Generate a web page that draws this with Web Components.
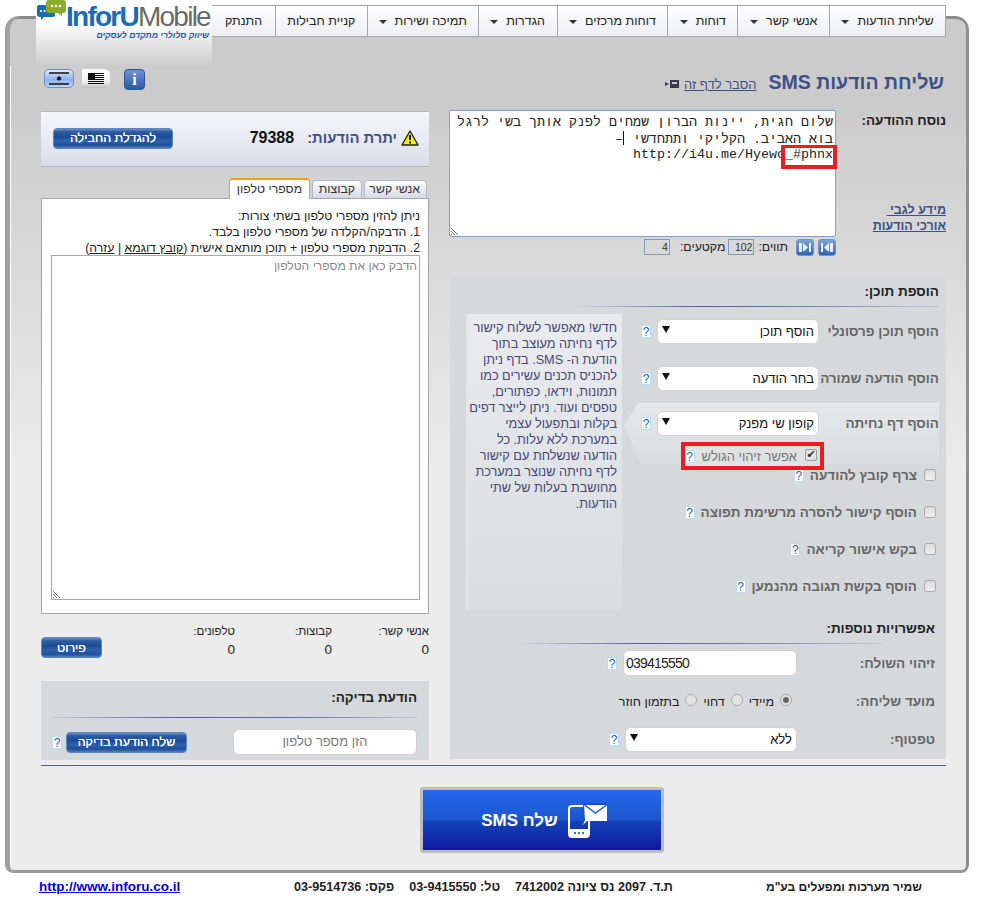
<!DOCTYPE html>
<html lang="he" dir="rtl">
<head>
<meta charset="utf-8">
<title>InforUMobile</title>
<style>
  html, body { margin: 0; padding: 0; background: #fff; }
  body { font-family: "Liberation Sans", Arial, sans-serif; font-size: 13px; color: #222; width: 982px; height: 898px; overflow: hidden; }
</style>
</head>
<body>
<sms-page></sms-page>
<script>
class HelpMark extends HTMLElement {
    connectedCallback() {
        this.attachShadow({ mode: 'open' });
        this.shadowRoot.innerHTML = `
            <style>
                :host {
                    display: inline-block;
                    box-sizing: border-box;
                    width: 10px;
                    height: 13px;
                    background: #fff;
                    border: 1px solid #bcdcf5;
                    color: #1a5fa8;
                    font: 12px/12px "Liberation Sans", sans-serif;
                    text-align: center;
                    flex: none;
                }
            </style>?`;
    }
}

class BlueButton extends HTMLElement {
    connectedCallback() {
        this.attachShadow({ mode: 'open' });
        this.shadowRoot.innerHTML = `
            <style>
                :host {
                    display: flex;
                    align-items: center;
                    justify-content: center;
                    box-sizing: border-box;
                    height: 21px;
                    border: 1px solid #5d86c0;
                    border-radius: 4px;
                    background: linear-gradient(#6f90c4 0, #2f5ca5 14%, #1c4a94 40%, #2f62ad 62%, #1f4f9c 85%, #4f7cbb 100%);
                    color: #fff;
                    font: 12.500px "Liberation Sans", sans-serif;
                    text-shadow: 0 0 0.5px #fff;
                    flex: none;
                }
            </style><slot></slot>`;
    }
}

class FakeSelect extends HTMLElement {
    connectedCallback() {
        this.attachShadow({ mode: 'open' });
        this.shadowRoot.innerHTML = `
            <style>
                :host {
                    display: flex;
                    align-items: center;
                    justify-content: space-between;
                    box-sizing: border-box;
                    height: 25px;
                    padding: 0 4px 0 4px;
                    background: #fff;
                    border: 1px solid #d2d2d2;
                    border-radius: 6px;
                    font: 13px "Liberation Sans", sans-serif;
                    color: #111;
                    flex: none;
                }
                .arrow { width: 0; height: 0; border: 4px solid transparent; border-top: 7px solid #111; border-bottom: 0; margin-top: -4px; }
            </style><span><slot></slot></span><i class="arrow"></i>`;
    }
}

class CheckRow extends HTMLElement {
    connectedCallback() {
        this.attachShadow({ mode: 'open' });
        this.shadowRoot.innerHTML = `
            <style>
                :host {
                    display: flex;
                    align-items: center;
                    gap: 7px;
                    height: 18px;
                    font: bold 13.500px "Liberation Sans", sans-serif;
                    color: #666;
                }
                .box {
                    box-sizing: border-box;
                    width: 12px;
                    height: 12px;
                    border: 1px solid #a9a9a9;
                    border-radius: 3px;
                    background: linear-gradient(#dcdcdc, #efefef);
                    flex: none;
                }
                help-mark { margin-right: -1px; }
            </style>
            <span class="box"></span>
            <span><slot></slot></span>
            <help-mark></help-mark>`;
    }
}

class SiteLogo extends HTMLElement {
    connectedCallback() {
        this.attachShadow({ mode: 'open' });
        this.shadowRoot.innerHTML = `
            <style>
                :host {
                    display: block;
                    position: relative;
                    box-sizing: border-box;
                    width: 176px;
                    height: 66px;
                    background: linear-gradient(#fff 0, #fff 22px, #cbcbcb 66px);
                    flex: none;
                    direction: ltr;
                }
                svg { position: absolute; left: 1px; top: 0; }
                .name {
                    position: absolute;
                    left: 30px;
                    top: 3px;
                    font: 28px/27px "Liberation Sans", sans-serif;
                    letter-spacing: -1.750px;
                    color: #6a6a6a;
                    white-space: nowrap;
                }
                .name b { color: #1b6db3; }
                .tag {
                    position: absolute;
                    right: 3px;
                    top: 30px;
                    direction: rtl;
                    font: italic bold 8.600px/10px "Liberation Sans", sans-serif;
                    color: #2a58a5;
                    white-space: nowrap;
                }
            </style>
            <svg width="30" height="21" viewBox="0 0 30 21">
                <path d="M2 5h14a2 2 0 0 1 2 2v8a2 2 0 0 1-2 2H7l-3 3 0-3H3a3 3 0 0 1-3-3V7a2 2 0 0 1 2-2z" fill="#1b6db3"/>
                <circle cx="4" cy="11" r="1" fill="#fff"/><circle cx="7.500" cy="11" r="1" fill="#fff"/>
                <path d="M12 0h14a3 3 0 0 1 3 3v7a3 3 0 0 1-3 3h-1l0 3-4-3H12a3 3 0 0 1-3-3V3a3 3 0 0 1 3-3z" fill="#8aab2b"/>
                <circle cx="15" cy="6" r="1.200" fill="#fff"/><circle cx="19" cy="6" r="1.200" fill="#fff"/><circle cx="23" cy="6" r="1.200" fill="#fff"/>
            </svg>
            <div class="name"><b>InforU</b>Mobile</div>
            <div class="tag">שיווק סלולרי מתקדם לעסקים</div>`;
    }
}

class TopNav extends HTMLElement {
    connectedCallback() {
        this.attachShadow({ mode: 'open' });
        const items = [
            ['שליחת הודעות', 116, 1], ['אנשי קשר', 92, 1], ['דוחות', 70, 1], ['דוחות מרכזים', 111, 1],
            ['הגדרות', 79, 1], ['תמיכה ושירות', 111, 1], ['קניית חבילות', 92, 0], ['התנתק', 63, 0]
        ];
        this.shadowRoot.innerHTML = `
            <style>
                :host {
                    display: flex;
                    box-sizing: border-box;
                    height: 32px;
                    margin-top: 5px;
                    border: 1px solid #a6a6a6;
                    border-left: 0;
                    background: linear-gradient(#fff, #eceef2);
                    flex: none;
                }
                .item {
                    box-sizing: border-box;
                    display: flex;
                    align-items: center;
                    justify-content: center;
                    gap: 8px;
                    border-left: 1px solid #a6a6a6;
                    font: 12.500px "Liberation Sans", sans-serif;
                    color: #222;
                }
                .item:last-child { border-left: 0; }
                .caret { width: 0; height: 0; border: 4px solid transparent; border-top: 4px solid #333; border-bottom: 0; margin-top: 1px; }
            </style>
            ${items.map(([t, w, c]) => `<div class="item" style="width:${w}px">${t}${c ? '<i class="caret"></i>' : ''}</div>`).join('')}`;
    }
}

class TitleBar extends HTMLElement {
    connectedCallback() {
        this.attachShadow({ mode: 'open' });
        this.shadowRoot.innerHTML = `
            <style>
                :host { display: flex; align-items: center; height: 44px; padding: 0 2px 12px 0; box-sizing: border-box; }
                h1 { margin: 0; font: bold 19.500px "Liberation Sans", sans-serif; color: #3f5089; white-space: nowrap; }
                a { display: flex; align-items: center; gap: 5px; margin-right: 12px; margin-top: 4px; color: #3f5089; text-decoration: underline; font: 13px "Liberation Sans", sans-serif; white-space: nowrap; }
                .tools { margin-right: auto; align-self: flex-start; margin-top: 3px; margin-left: 3px; display: flex; direction: ltr; }
                .pill { box-sizing: border-box; height: 19px; display: flex; align-items: center; justify-content: center; }
                .il { width: 30px; margin-right: 8px; border-radius: 5px; background: linear-gradient(#e3ecfb, #8db0f4 55%, #c2d4f7); border: 1px solid #6d8fc9; }
                .us { width: 28px; margin-right: 14px; border-radius: 0 6px 6px 0; background: linear-gradient(#fff, #ececec 70%, #bcbcbc); }
                .info { box-sizing: border-box; width: 21px; height: 21px; border: 1px solid #2f5594; border-radius: 4px; background: linear-gradient(#6e94cf, #2a5ba6); color: #fff; font: bold 16px/19px "Liberation Serif", serif; text-align: center; }
            </style>
            <h1>שליחת הודעות SMS</h1>
            <a>הסבר לדף זה
                <svg width="14" height="10" viewBox="0 0 14 10"><path d="M5 1h9v8H5zM0 3l4 2-4 2z" fill="#3a3a4a"/><path d="M7 3h5v2H7z" fill="#ccc"/></svg>
            </a>
            <div class="tools">
                <div class="pill il"><svg width="20" height="13" viewBox="0 0 20 13"><path d="M0 1h20M0 12h20" stroke="#111" stroke-width="1.400"/><path d="M10 3.500l2.500 4.200H7.500zM10 9.200L7.500 5.200h5z" fill="#111"/></svg></div>
                <div class="pill us"><svg width="16" height="11" viewBox="0 0 16 11"><path d="M0 .5h16M0 2.500h16M0 4.500h16M0 6.500h16M0 8.500h16M0 10.500h16" stroke="#111"/><rect width="7" height="6" fill="#111"/></svg></div>
                <div class="info">i</div>
            </div>`;
    }
}

class MessageEditor extends HTMLElement {
    connectedCallback() {
        this.attachShadow({ mode: 'open' });
        this.shadowRoot.innerHTML = `
            <style>
                :host { display: grid; grid-template-columns: 110px 387px; height: 167px; font-family: "Liberation Sans", sans-serif; }
                .side { position: relative; display: flex; flex-direction: column; }
                .side b { font-size: 13.500px; color: #222; margin-top: 3px; }
                .links { margin-top: 74px; color: #3f5089; font-size: 12.500px; font-weight: bold; line-height: 16px; text-decoration: underline; }
                .area {
                    position: relative;
                    box-sizing: border-box;
                    height: 127px;
                    background: #fff;
                    border: 1px solid #7f9fd8;
                    border-radius: 2px;
                    padding: 4px 2px 0 0;
                    font: 13.330px/16px "Liberation Mono", monospace;
                    color: #222;
                }
                .area div { white-space: nowrap; height: 16px; }
                .cursor { display: inline-block; width: 1px; height: 14px; background: #111; vertical-align: -2px; margin-right: 1px; }
                .mark {
                    position: absolute;
                    left: 331px;
                    top: 34px;
                    width: 56px;
                    height: 24px;
                    box-sizing: border-box;
                    border: 4px solid #ed1c24;
                    border-top: 0;
                }
                .mark::before { content: ""; position: absolute; left: -4px; right: -4px; top: 0; height: 3px; background: #ed1c24; }
                .grip { position: absolute; left: 1px; bottom: 1px; }
                .count { display: flex; align-items: center; gap: 4px; margin-top: 1px; height: 18px; font-size: 12.300px; color: #222; }
                .pager { box-sizing: border-box; width: 18px; height: 17px; border: 1px solid #6f95c9; border-radius: 3px; background: linear-gradient(#7fa3d6, #2c64ae); flex: none; }
                .pager svg { display: block; margin: 2px auto 0; }
                .val { box-sizing: border-box; width: 26px; height: 16px; border: 1px solid #7d9bb8; font-size: 10.500px; line-height: 15px; padding-right: 1px; color: #333; }
                .lbl { margin-right: 4px; }
                .segs { margin-right: -1px; }
                .val.last { margin-right: 6px; }
            </style>
            <div class="side">
                <b>נוסח ההודעה:</b>
                <div class="links">מידע לגבי&nbsp;<br>אורכי הודעות</div>
            </div>
            <div>
                <div class="area">
                    <div>שלום חגית, יינות הברון שמחים לפנק אותך בשי לרגל</div>
                    <div>בוא האביב. הקליקי ותתחדשי <i class="cursor"></i>–</div>
                    <div dir="ltr" style="text-align:right">http://i4u.me/Hyewo_#phnx</div>
                    <i class="mark"></i>
                    <svg class="grip" width="9" height="9" viewBox="0 0 9 9"><path d="M0 2l7 7M0 5l4 4M0 8l1 1" stroke="#777" fill="none"/></svg>
                </div>
                <div class="count">
                    <span class="pager"><svg width="14" height="11" viewBox="0 0 14 11"><path d="M1 1h2v9H1zM9 1L4 5.500 9 10zM10 1h3v9h-3z" fill="#e8f0fb"/></svg></span>
                    <span class="pager"><svg width="14" height="11" viewBox="0 0 14 11"><path d="M13 1h-2v9h2zM5 1l5 4.500L5 10zM4 1H1v9h3z" fill="#e8f0fb"/></svg></span>
                    <span class="lbl">תווים:</span><span class="val">102</span>
                    <span class="segs">מקטעים:</span><span class="val last">4</span>
                </div>
            </div>`;
    }
}

class ContentPanel extends HTMLElement {
    connectedCallback() {
        this.attachShadow({ mode: 'open' });
        this.shadowRoot.innerHTML = `
            <style>
                :host { display: block; box-sizing: border-box; height: 482px; background: #d5d9dc; font-family: "Liberation Sans", sans-serif; }
                h3 { margin: 0; font: bold 13.500px/15px "Liberation Sans", sans-serif; color: #222; }
                .rule { height: 1px; background: linear-gradient(to right, #d5d9dc, #4f5ba8 35%, #8088bb 70%, #c3c8d0); }
                .head { padding: 7px 7px 0 0; }
                .head h3 { height: 22px; }
                .head .rule { margin-left: 124px; }
                .body { display: grid; grid-template-columns: 315px 156px; gap: 2px; padding-left: 16px; padding-right: 7px; }
                .line { display: flex; align-items: center; height: 25px; font: bold 13.500px "Liberation Sans", sans-serif; color: #666; }
                .line .lbl { width: 120px; flex: none; white-space: nowrap; }
                .line fake-select { width: 162px; }
                .line help-mark { margin-right: 6px; }
                .form { padding-top: 12px; }
                .second { margin-top: 22px; }
                .lit { position: relative; height: 62px; margin-top: 12px; padding-top: 8px; box-sizing: border-box; }
                .lit::before {
                    content: "";
                    position: absolute;
                    inset: 0;
                    background: linear-gradient(#e6e9ea, #d9dcde);
                    clip-path: polygon(14px 0, 100% 0, 100% 100%, 18px 100%, 0 23px);
                }
                .lit > * { position: relative; }
                .flag {
                    box-sizing: border-box;
                    width: 143px;
                    height: 28px;
                    margin-top: 6px;
                    margin-right: 115px;
                    border: 4px solid #ed1c24;
                    padding-right: 3px;
                    display: flex;
                    align-items: center;
                    gap: 8px;
                    font-size: 13px;
                    color: #777;
                    background: #dfe2e3;
                    white-space: nowrap;
                }
                .flag .box { box-sizing: border-box; width: 12px; height: 12px; border: 1px solid #999; border-radius: 2px; background: #e3e3e3; color: #333; font: bold 11px/10px "DejaVu Sans", sans-serif; text-align: center; margin-top: -3px; flex: none; }
                .flag help-mark { margin-right: -1px; }
                check-row { margin-right: 3px; }
                .checks { margin-top: 1px; display: flex; flex-direction: column; gap: 19px; }
                .note {
                    box-sizing: border-box;
                    height: 296px;
                    margin-top: 7px;
                    padding: 6px 5px 0 0;
                    background: linear-gradient(#e9ebee, #d9dde0);
                    border-left: 2px solid #e3e5e7;
                    font: 12.700px/16px "Liberation Sans", sans-serif;
                    color: #47477a;
                    white-space: nowrap;
                }
                .extra { padding: 10px 11px 0 0; }
                .extra h3 { height: 22px; margin-top: 1px; }
                .extra .rule { margin: 0 54px 0 0; width: 366px; }
                .extra .lbl { width: 138px; }
                .field { box-sizing: border-box; width: 174px; height: 26px; background: #fff; border: 1px solid #d2d2d2; border-radius: 6px; padding: 0 2px; font: 14px/24px "Liberation Sans", sans-serif; letter-spacing: -0.800px; color: #222; direction: ltr; text-align: left; font-weight: normal; }
                .radios { display: flex; align-items: center; gap: 6px; margin-right: 5px; font: 12.500px "Liberation Sans", sans-serif; color: #222; }
                .radio { box-sizing: border-box; width: 12px; height: 12px; border: 1px solid #aaa; border-radius: 50%; background: #e4e4e4; margin-top: -4px; position: relative; flex: none; }
                .radio.on::after { content: ""; position: absolute; inset: 2px; border-radius: 50%; background: #666; }
                .extra .line fake-select { width: 172px; }
            </style>
            <div class="head"><h3>הוספת תוכן:</h3><div class="rule"></div></div>
            <div class="body">
                <div class="form">
                    <div class="line"><span class="lbl">הוסף תוכן פרסונלי</span><fake-select>הוסף תוכן</fake-select><help-mark></help-mark></div>
                    <div class="line second"><span class="lbl">הוסף הודעה שמורה</span><fake-select>בחר הודעה</fake-select><help-mark></help-mark></div>
                    <div class="lit">
                        <div class="line"><span class="lbl">הוסף דף נחיתה</span><fake-select>קופון שי מפנק</fake-select><help-mark></help-mark></div>
                        <div class="flag"><span class="box">✔</span><span>אפשר זיהוי הגולש</span><help-mark></help-mark></div>
                    </div>
                    <div class="checks">
                        <check-row>צרף קובץ להודעה</check-row>
                        <check-row>הוסף קישור להסרה מרשימת תפוצה</check-row>
                        <check-row>בקש אישור קריאה</check-row>
                        <check-row>הוסף בקשת תגובה מהנמען</check-row>
                    </div>
                </div>
                <div class="note">חדש! מאפשר לשלוח קישור<br>לדף נחיתה מעוצב בתוך<br>הודעת ה- SMS. בדף ניתן<br>להכניס תכנים עשירים כמו<br>תמונות, וידאו, כפתורים,<br>טפסים ועוד. ניתן לייצר דפים<br>בקלות ובתפעול עצמי<br>במערכת ללא עלות. כל<br>הודעה שנשלחת עם קישור<br>לדף נחיתה שנוצר במערכת<br>מחושבת בעלות של שתי<br>הודעות.</div>
            </div>
            <div class="extra">
                <h3>אפשרויות נוספות:</h3>
                <div class="rule"></div>
                <div class="line" style="height:26px;margin-top:6px"><span class="lbl">זיהוי השולח:</span><div class="field">039415550</div><help-mark style="margin-right:6px"></help-mark></div>
                <div class="line" style="margin-top:13px"><span class="lbl">מועד שליחה:</span>
                    <div class="radios"><i class="radio on"></i><span>מיידי</span><i class="radio"></i><span>דחוי</span><i class="radio"></i><span>בתזמון חוזר</span></div>
                </div>
                <div class="line" style="margin-top:13px"><span class="lbl">טפטוף:</span><fake-select>ללא</fake-select><help-mark style="margin-right:6px"></help-mark></div>
            </div>`;
    }
}

class BalanceBox extends HTMLElement {
    connectedCallback() {
        this.attachShadow({ mode: 'open' });
        this.shadowRoot.innerHTML = `
            <style>
                :host {
                    display: flex;
                    align-items: center;
                    box-sizing: border-box;
                    height: 56px;
                    margin-top: 1px;
                    padding: 0 10px 2px 12px;
                    border-top: 1px solid #b4b4b4;
                    border-bottom: 1px solid #b4b4b4;
                    background: linear-gradient(#f5f7fa, #d9dde8);
                    font-family: "Liberation Sans", sans-serif;
                }
                b.t { font-size: 14.800px; color: #44508a; margin-right: 4px; white-space: nowrap; }
                b.n { font-size: 16px; color: #111; margin-right: 13px; }
                blue-button { width: 120px; margin-right: auto; }
            </style>
            <svg width="18" height="16" viewBox="0 0 18 16"><path d="M9 1l8 14H1z" fill="#f6ee00" stroke="#222" stroke-width="1.400" stroke-linejoin="round"/><path d="M9 5v5M9 11.500v2" stroke="#111" stroke-width="2"/></svg>
            <b class="t">יתרת הודעות:</b>
            <b class="n">79388</b>
            <blue-button>להגדלת החבילה</blue-button>`;
    }
}

class RecipientTabs extends HTMLElement {
    connectedCallback() {
        this.attachShadow({ mode: 'open' });
        this.shadowRoot.innerHTML = `
            <style>
                :host { display: block; margin-top: 12px; font-family: "Liberation Sans", sans-serif; }
                .tabs { display: flex; gap: 2px; height: 19px; padding-right: 2px; position: relative; align-items: flex-end; }
                .tab { box-sizing: border-box; height: 18px; padding: 0 6px; border: 1px solid #b4b8c6; border-bottom: 0; border-radius: 4px 4px 0 0; background: linear-gradient(#fff, #d5d8e6); font-size: 12.300px; line-height: 17px; color: #333; white-space: nowrap; text-align: center; }
                .tab.on { position: relative; height: 21px; margin-bottom: -1px; background: #fff; border: 1px solid #aaa; border-top: 2px solid #f1a020; border-bottom: 0; line-height: 18px; }
                .box { box-sizing: border-box; height: 416px; background: #fff; border: 1px solid #a6a6a6; padding: 9px 8px 0 9px; font-size: 12.300px; line-height: 16px; color: #222; }
                u { text-decoration: underline; }
                .paste { position: relative; box-sizing: border-box; height: 345px; margin-top: -1px; border: 1px solid #a9a9a9; padding: 3px 2px; color: #888; font-size: 12.100px; line-height: 15px; }
                .grip { position: absolute; left: 1px; bottom: 1px; }
            </style>
            <div class="tabs">
                <div class="tab" style="width:63px">אנשי קשר</div>
                <div class="tab" style="width:50px">קבוצות</div>
                <div class="tab on" style="width:81px">מספרי טלפון</div>
            </div>
            <div class="box">
                ניתן להזין מספרי טלפון בשתי צורות:<br>
                1. הדבקה/הקלדה של מספרי טלפון בלבד.<br>
                2. הדבקת מספרי טלפון + תוכן מותאם אישית (<u>קובץ דוגמא</u> | <u>עזרה</u>)
                <div class="paste">הדבק כאן את מספרי הטלפון
                    <svg class="grip" width="9" height="9" viewBox="0 0 9 9"><path d="M0 2l7 7M0 5l4 4M0 8l1 1" stroke="#777" fill="none"/></svg>
                </div>
            </div>`;
    }
}

class CountRow extends HTMLElement {
    connectedCallback() {
        this.attachShadow({ mode: 'open' });
        this.shadowRoot.innerHTML = `
            <style>
                :host { display: flex; box-sizing: border-box; height: 67px; padding-top: 11px; font-family: "Liberation Sans", sans-serif; color: #222; }
                .c { width: 97px; font-size: 11.500px; line-height: 13px; }
                .c div { font-size: 13.500px; margin-top: 4px; line-height: 16px; }
                blue-button { width: 61px; margin-top: 12px; margin-right: auto; }
            </style>
            <div class="c">אנשי קשר:<div>0</div></div>
            <div class="c">קבוצות:<div>0</div></div>
            <div class="c">טלפונים:<div>0</div></div>
            <blue-button>פירוט</blue-button>`;
    }
}

class TestPanel extends HTMLElement {
    connectedCallback() {
        this.attachShadow({ mode: 'open' });
        this.shadowRoot.innerHTML = `
            <style>
                :host { display: block; box-sizing: border-box; height: 79px; padding: 9px 12px 0 11px; background: #d5d9dc; font-family: "Liberation Sans", sans-serif; }
                h3 { margin: 0; height: 27px; font: bold 13.500px/16px "Liberation Sans", sans-serif; color: #222; }
                .rule { height: 1px; background: linear-gradient(to right, #c3c8d0, #4f5ba8 35%, #6a72b0 70%, #c3c8d0); }
                .row { display: flex; align-items: center; margin-top: 11px; }
                .field { box-sizing: border-box; width: 184px; height: 26px; background: #fff; border: 1px solid #d2d2d2; border-radius: 6px; text-align: center; font-size: 13px; line-height: 24px; color: #777; }
                blue-button { width: 121px; margin-right: 46px; }
                help-mark { margin-right: 4px; }
            </style>
            <h3>הודעת בדיקה:</h3>
            <div class="rule"></div>
            <div class="row"><div class="field">הזן מספר טלפון</div><blue-button>שלח הודעת בדיקה</blue-button><help-mark></help-mark></div>`;
    }
}

class SendButton extends HTMLElement {
    connectedCallback() {
        this.attachShadow({ mode: 'open' });
        this.shadowRoot.innerHTML = `
            <style>
                :host {
                    display: flex;
                    align-items: center;
                    justify-content: center;
                    gap: 9px;
                    box-sizing: border-box;
                    width: 244px;
                    height: 66px;
                    padding: 2px 0 0 4px;
                    border: 3px solid #bdbdbd;
                    border-radius: 3px;
                    background: linear-gradient(#2568ee 0, #1c56cc 50%, #1443b8 52%, #1018a0 100%);
                    color: #fff;
                    font: bold 17px "Liberation Sans", sans-serif;
                }
            </style>
            <svg width="40" height="36" viewBox="0 0 40 36">
                <rect x="2" y="3" width="20" height="31" rx="3" fill="none" stroke="#fff" stroke-width="2"/>
                <rect x="2" y="26" width="20" height="8" rx="2" fill="#fff"/>
                <circle cx="8" cy="30" r="1" fill="#1230aa"/><circle cx="12" cy="30" r="1" fill="#1230aa"/><circle cx="16" cy="30" r="1" fill="#1230aa"/>
                <path d="M17 1h23v16H21l-6 5 3-7z" fill="#1a50c4" stroke="#1a50c4" stroke-width="2"/>
                <path d="M17 2h23v16H20l-4 4 2-5z" fill="#fff"/>
                <path d="M17.500 2l11 8 11-8" fill="none" stroke="#2060d0" stroke-width="1.500"/>
            </svg>
            <span>שלח SMS</span>`;
    }
}

class SiteFooter extends HTMLElement {
    connectedCallback() {
        this.attachShadow({ mode: 'open' });
        this.shadowRoot.innerHTML = `
            <style>
                :host {
                    display: flex;
                    align-items: center;
                    box-sizing: border-box;
                    height: 25px;
                    padding: 2px 60px 0 0;
                    font: bold 12px "Liberation Sans", sans-serif;
                    color: #222;
                    white-space: nowrap;
                }
                .addr { display: flex; gap: 15px; margin-right: 93px; font-size: 12.600px; }
                a { margin-right: auto; margin-left: 39px; color: #0000ee; text-decoration: underline; font-size: 13.500px; }
            </style>
            <div>שמיר מערכות ומפעלים בע"מ</div>
            <div class="addr"><span>ת.ד. 2097 נס ציונה 7412002</span><span>טל: 03-9415550</span><span>פקס: 03-9514736</span></div>
            <a>http://www.inforu.co.il</a>`;
    }
}

class SmsPage extends HTMLElement {
    connectedCallback() {
        this.attachShadow({ mode: 'open' });
        this.shadowRoot.innerHTML = `
            <style>
                :host { display: block; }
                .panel {
                    display: flow-root;
                    box-sizing: border-box;
                    width: 964px;
                    height: 857px;
                    margin: 16px 13px 0 5px;
                    padding: 0 23px 0 36px;
                    border-radius: 14px 14px 8px 8px;
                    background:
                        linear-gradient(#fff, #fff) 5px 50px / 1px 804px no-repeat,
                        linear-gradient(#cbcbcb 0, #cbcbcb 85px, #dadada 254px, #ececec 460px);
                    box-shadow: inset 5px 0 0 #a0a0a0, inset -3px 0 0 #8f8f8f, inset 0 3px 0 #8a8a8a, inset 0 -3px 0 #999;
                }
                .top { display: flex; margin: -16px 0 0 -5px; height: 66px; }
                .grid { display: grid; grid-template-columns: 496px 388px; gap: 21px; }
                .divider { height: 1px; background: #5058a8; margin-top: 5px; }
                .send { display: flex; margin: 21px 282px 0 0; }
            </style>
            <div class="panel">
                <div class="top"><top-nav style="width:734px"></top-nav><site-logo></site-logo></div>
                <title-bar></title-bar>
                <div class="grid">
                    <div>
                        <message-editor></message-editor>
                        <content-panel></content-panel>
                    </div>
                    <div>
                        <balance-box></balance-box>
                        <recipient-tabs></recipient-tabs>
                        <count-row></count-row>
                        <test-panel></test-panel>
                    </div>
                </div>
                <div class="divider"></div>
                <div class="send"><send-button></send-button></div>
            </div>
            <site-footer></site-footer>`;
    }
}

customElements.define('help-mark', HelpMark);
customElements.define('blue-button', BlueButton);
customElements.define('fake-select', FakeSelect);
customElements.define('check-row', CheckRow);
customElements.define('site-logo', SiteLogo);
customElements.define('top-nav', TopNav);
customElements.define('title-bar', TitleBar);
customElements.define('message-editor', MessageEditor);
customElements.define('content-panel', ContentPanel);
customElements.define('balance-box', BalanceBox);
customElements.define('recipient-tabs', RecipientTabs);
customElements.define('count-row', CountRow);
customElements.define('test-panel', TestPanel);
customElements.define('send-button', SendButton);
customElements.define('site-footer', SiteFooter);
customElements.define('sms-page', SmsPage);
</script>
</body>
</html>
